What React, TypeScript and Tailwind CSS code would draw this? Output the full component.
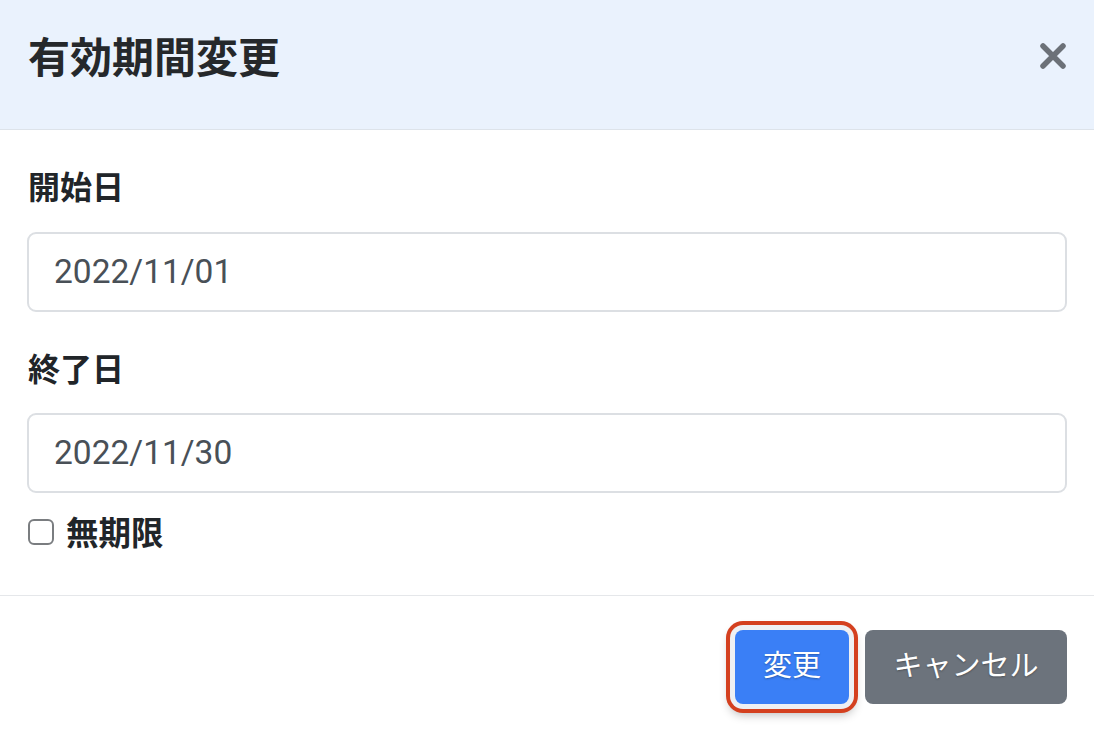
import React from "react";

const font = { fontFamily: 'Roboto, "Noto Sans CJK JP", sans-serif' };

export default function App() {
  return (
    <div
      className="w-[1094px] h-[734px] bg-white flex flex-col overflow-hidden"
      style={font}
    >
      <div className="h-[130px] shrink-0 bg-[#eaf2fd] border-b border-[#dde3ea] flex items-center justify-between pl-[28px] pr-[28px] pb-[12px]">
        <h5 className="text-[42px] leading-[48px] font-bold text-[#25282b]">有効期間変更</h5>
        <svg width="26" height="26" viewBox="0 0 26 26" className="mb-[6px]">
          <path d="M3 3 L23 23 M23 3 L3 23" stroke="#6c7178" strokeWidth="5.5" strokeLinecap="round" />
        </svg>
      </div>
      <div className="flex flex-col px-[27px] pt-[34px] pb-[39px] border-b border-[#e5e7ea]">
        <label className="text-[32px] leading-[48px] font-bold text-[#212529] pl-[1px]">開始日</label>
        <div className="mt-[20px] h-[80px] rounded-[9px] border-2 border-[#dcdfe3] flex items-center pl-[25px] text-[33.5px] text-[#495057]">
          2022/11/01
        </div>
        <label className="mt-[34px] text-[32px] leading-[48px] font-bold text-[#212529] pl-[1px]">終了日</label>
        <div className="mt-[19px] h-[80px] rounded-[9px] border-2 border-[#dcdfe3] flex items-center pl-[25px] text-[33.5px] text-[#495057]">
          2022/11/30
        </div>
        <div className="mt-[15px] h-[48px] flex items-center">
          <div className="w-[26px] h-[26px] rounded-[6px] border-2 border-[#7a7d80] bg-white ml-[1px]" />
          <span className="ml-[12px] text-[32.5px] font-bold text-[#212529] leading-[48px] mt-[3px]">無期限</span>
        </div>
      </div>
      <div className="flex justify-end items-start pr-[27px] pt-[34px] gap-[16px]">
        <button
          className="h-[74px] w-[114px] rounded-[8px] bg-[#3a7ff6] text-white text-[29px] flex items-center justify-center shadow-[0_0_0_5px_#eef0f3,0_0_0_9px_#d4401f,0_5px_10px_6px_rgba(0,0,0,0.25)]"
          style={{ textShadow: "0 1px 2px rgba(0,0,0,0.3)" }}
        >
          変更
        </button>
        <button
          className="h-[74px] w-[202px] rounded-[8px] bg-[#6c737c] text-white text-[29px] flex items-center justify-center"
          style={{ textShadow: "0 1px 2px rgba(0,0,0,0.3)" }}
        >
          キャンセル
        </button>
      </div>
    </div>
  );
}
